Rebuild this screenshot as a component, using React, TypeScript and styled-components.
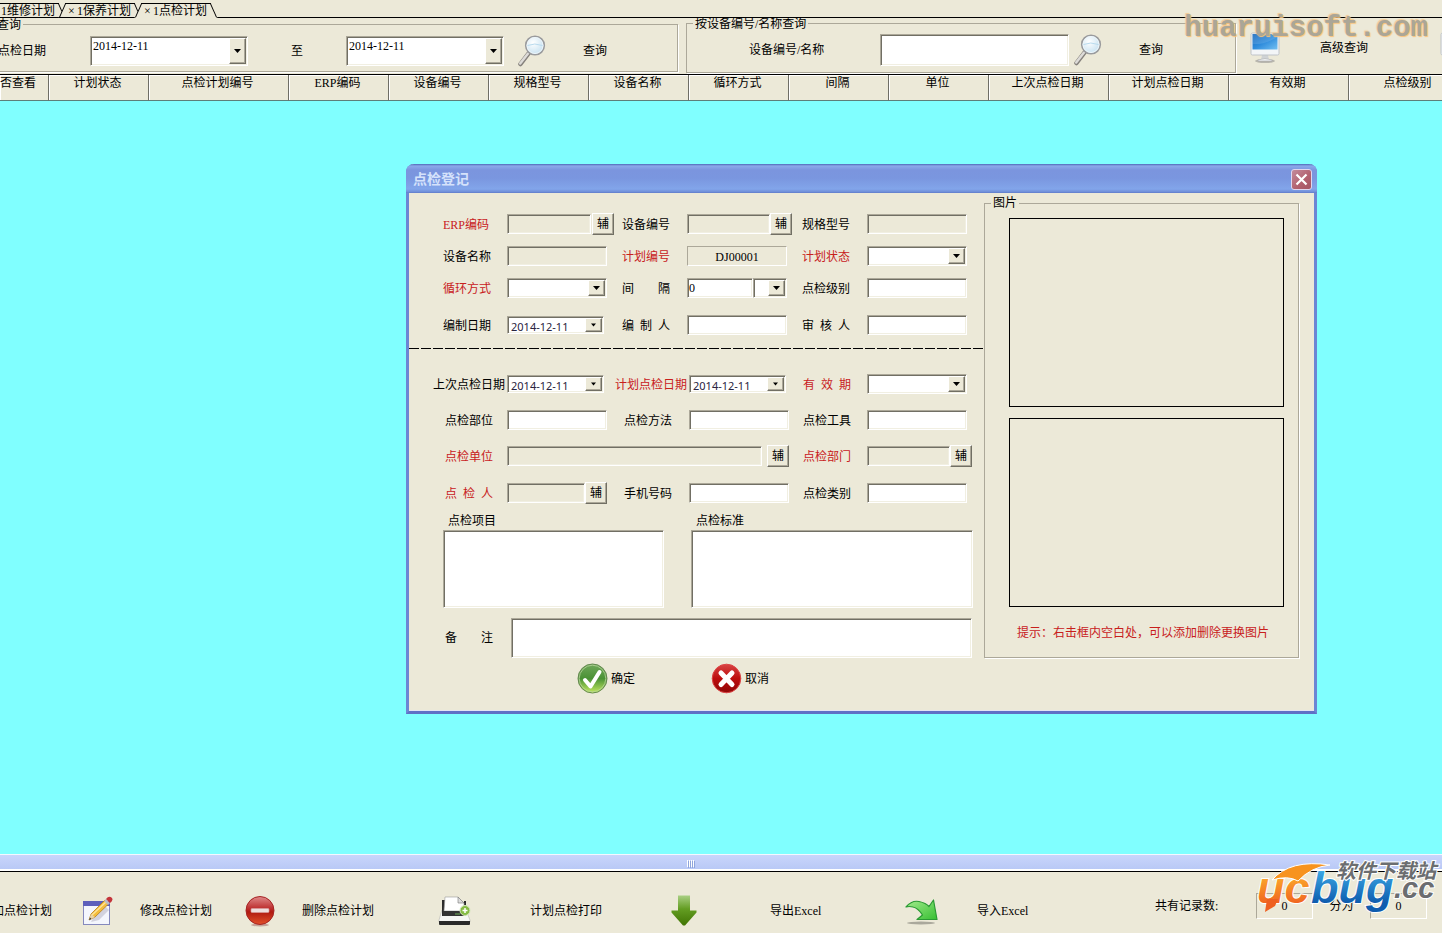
import React from 'react';
import styled, { createGlobalStyle, css } from 'styled-components';

const FACE = '#ece9d8';
const RED = '#c8201c';

const GlobalStyle = createGlobalStyle`
  *, *::before, *::after { box-sizing: border-box; }
  body { margin: 0; background: ${FACE}; }
  body, button, input, select, textarea {
    font-family: "Liberation Serif", "Noto Sans CJK SC", serif;
    font-size: 12px;
    line-height: 14px;
    color: #000;
  }
  button { background: none; border: 0; padding: 0; cursor: pointer; white-space: nowrap; }
  svg { display: block; flex: none; }
`;

const sunken = css`
  border: 1px solid;
  border-color: #aca899 #fff #fff #aca899;
  box-shadow: inset 1px 1px 0 #716f64, inset -1px -1px 0 #f1efe2;
`;

const raised = css`
  background: ${FACE};
  border: 1px solid;
  border-color: #fff #716f64 #716f64 #fff;
  box-shadow: inset -1px -1px 0 #aca899;
`;

const Page = styled.div`
  position: relative;
  display: flex;
  flex-direction: column;
  min-height: 100vh;
  overflow: hidden;
  background: ${FACE};
`;

/* ---------- tabs ---------- */

const TabStrip = styled.nav`
  display: flex;
  align-items: flex-end;
  height: 18px;
  margin-left: -14px;
  box-shadow: inset 0 -1px 0 #000;
`;

const Tab = styled.button<{ $active?: boolean }>`
  position: relative;
  isolation: isolate;
  display: flex;
  align-items: center;
  width: 76px;
  height: 15px;
  padding-left: 6px;

  &::before, &::after {
    content: '';
    position: absolute;
    z-index: -1;
    top: 0;
    bottom: 0;
    width: 62%;
    background: ${FACE};
    border-top: 1px solid #000;
    border-bottom: 1px solid ${p => (p.$active ? FACE : '#000')};
  }
  &::before { left: 0; border-left: 1px solid #000; transform: skewX(-24deg); }
  &::after { right: 0; border-right: 1px solid #000; transform: skewX(24deg); }
`;

const TabClose = styled.span`
  width: 9px;
  text-align: left;
`;

/* ---------- query bar ---------- */

const QueryBar = styled.form`
  display: flex;
  align-items: center;
  gap: 8px;
  height: 57px;
  margin-left: -12px;
  padding-bottom: 2px;
  border-bottom: 1px solid #000;
`;

const Group = styled.fieldset`
  min-width: 0;
  margin: 0;
  padding: 0;
  border: 1px solid #aca899;
  box-shadow: 1px 1px 0 #fff;
`;

const Legend = styled.legend`
  margin-left: 6px;
  padding: 0 2px;
  line-height: 12px;
  background: ${FACE};
`;

const QueryGroup = styled(Group)<{ $width: number; $height: number }>`
  flex: none;
  width: ${p => p.$width}px;
  height: ${p => p.$height}px;
`;

const QueryGrid = styled.div<{ $columns: string; $indent: number }>`
  display: grid;
  grid-template-columns: ${p => p.$columns};
  align-items: center;
  height: 40px;
  padding-left: ${p => p.$indent}px;
`;

const Between = styled.label`
  text-align: center;
`;

const IconButton = styled.button<{ $gap: number; $indent?: number }>`
  display: flex;
  align-items: center;
  gap: ${p => p.$gap}px;
  padding-left: ${p => p.$indent ?? 0}px;
`;

const Extras = styled.div`
  display: flex;
  flex: none;
  gap: 72px;
  padding: 5px 0 0 6px;
`;

/* ---------- controls ---------- */

const TextInput = styled.input<{ $width?: number; $height?: number }>`
  ${sunken}
  flex: none;
  width: ${p => p.$width ?? 100}px;
  height: ${p => p.$height ?? 20}px;
  padding: 0 1px;
  border-radius: 0;
  background: ${p => (p.readOnly ? FACE : '#fff')};
  outline: none;
`;

const TextBox = styled.textarea<{ $width: number; $height: number }>`
  ${sunken}
  display: block;
  width: ${p => p.$width}px;
  height: ${p => p.$height}px;
  padding: 2px;
  resize: none;
  background: #fff;
  outline: none;
`;

const ComboFrame = styled.div<{ $width: number; $height: number }>`
  ${sunken}
  display: flex;
  flex: none;
  width: ${p => p.$width}px;
  height: ${p => p.$height}px;
  padding: 1px;
  background: #fff;
`;

const ComboInput = styled.input<{ $small?: boolean }>`
  flex: 1;
  min-width: 0;
  align-self: ${p => (p.$small ? 'stretch' : 'flex-start')};
  padding: ${p => (p.$small ? '3px 0 0 2px' : '1px 0 0 1px')};
  border: 0;
  background: transparent;
  outline: none;
  font-family: ${p => (p.$small ? '"Noto Sans", sans-serif' : 'inherit')};
  font-size: ${p => (p.$small ? 11 : 12)}px;
  color: ${p => (p.$small ? '#2a2440' : '#000')};
`;

const ComboSelect = styled.select`
  flex: 1;
  min-width: 0;
  padding: 0;
  border: 0;
  appearance: none;
  background: transparent;
  outline: none;
`;

const ArrowButton = styled.button`
  ${raised}
  display: flex;
  flex: none;
  align-items: center;
  justify-content: center;
  width: 17px;
`;

const ArrowFace = styled.span`
  ${raised}
  display: flex;
  flex: none;
  align-items: center;
  justify-content: center;
  width: 17px;
  pointer-events: none;
`;

const AssistButton = styled.button`
  ${raised}
  flex: none;
  width: 22px;
  height: 22px;
`;

const Down = ({ size = 7 }: { size?: number }) => (
  <svg width={size} height="4" viewBox="0 0 7 4" aria-hidden="true">
    <path d="M0 0h7L3.500 4z" fill="#000" />
  </svg>
);

const DateBox = ({ id, width, height, small }: { id: string; width: number; height: number; small?: boolean }) => (
  <ComboFrame $width={width} $height={height}>
    <ComboInput id={id} defaultValue="2014-12-11" $small={small} />
    <ArrowButton type="button" aria-label="选择日期">
      <Down size={small ? 5 : 7} />
    </ArrowButton>
  </ComboFrame>
);

const SelectBox = ({ id, width, label }: { id: string; width: number; label?: string }) => (
  <ComboFrame $width={width} $height={20}>
    <ComboSelect id={id} aria-label={label} />
    <ArrowFace>
      <Down />
    </ArrowFace>
  </ComboFrame>
);

/* ---------- record table ---------- */

const Records = styled.table`
  flex: none;
  width: 1469px;
  table-layout: fixed;
  border-collapse: separate;
  border-spacing: 0;
`;

const HeadCell = styled.th<{ $clipped?: boolean }>`
  height: 26px;
  padding: ${p => (p.$clipped ? '1px 13px 0 0' : '1px 2px 0 0')};
  vertical-align: top;
  text-align: ${p => (p.$clipped ? 'right' : 'center')};
  font-weight: normal;
  white-space: nowrap;
  border-right: 1px solid #6f6e66;
  border-bottom: 1px solid #5d7f7a;
  box-shadow: inset 1px 1px 0 #fff;
`;

const Workspace = styled.main`
  position: relative;
  flex: 1 0 auto;
  min-height: 640px;
  background: #80ffff;
`;

const Splitter = styled.div`
  display: flex;
  align-items: center;
  justify-content: center;
  gap: 1px;
  height: 18px;
  padding-right: 62px;
  border-top: 1px solid #f4f8ff;
  border-bottom: 1px solid #000;
  background: linear-gradient(#c9d5fb, #b9c9f6 14px, #fff 14px);
`;

const Grip = styled.span`
  width: 1px;
  height: 7px;
  background: #fff;
  box-shadow: 1px 1px 0 #8fa5dc;
`;

/* ---------- dialog ---------- */

const Dialog = styled.section`
  position: absolute;
  top: 63px;
  left: 406px;
  width: 911px;
  background: ${FACE};
  border: 3px solid #6c86d4;
  border-top: 0;
  border-bottom-color: #5f70c6;
  border-radius: 8px 8px 0 0;
  box-shadow: inset 0 -1px 0 #e4e4f4;
`;

const TitleBar = styled.header`
  display: flex;
  align-items: center;
  justify-content: space-between;
  height: 29px;
  margin: 0 -3px;
  padding: 2px 5px 0 7px;
  border-radius: 8px 8px 0 0;
  background: linear-gradient(#4f68b8 0, #8ba9ea 2px, #7b95de 6px, #7a96df 14px, #82a5ea 25px, #6f8ed8 28px, #5d78c6);
`;

const Title = styled.h1`
  margin: 0;
  font-size: 14px;
  line-height: 18px;
  font-weight: bold;
  color: #d5e2fb;
`;

const CloseButton = styled.button`
  display: flex;
  align-items: center;
  justify-content: center;
  width: 21px;
  height: 21px;
  border: 1px solid #dfd6ee;
  border-radius: 3px;
  background: linear-gradient(135deg, #c38c9c, #b2606e 60%, #a45664);
`;

const DialogBody = styled.form`
  display: flex;
  align-items: flex-start;
  padding-right: 15px;
`;

const FormSide = styled.div`
  flex: 1;
  min-width: 0;
`;

const Fields = styled.div<{ $second?: boolean }>`
  display: grid;
  align-items: center;
  grid-template-columns: ${p => (p.$second ? '62px 117px 65px 114px 64px 1fr' : '64px 115px 65px 115px 65px 1fr')};
  grid-template-rows: ${p => (p.$second ? '36px 36px 36px 38px' : '32px 32px 32px 42px')};
  padding: ${p => (p.$second ? '17px 0 0 36px' : '15px 0 2px 34px')};
`;

const Divider = styled.hr`
  height: 1px;
  margin: 0;
  border: 0;
  background: repeating-linear-gradient(90deg, #000 0 10px, transparent 10px 12px);
`;

const FieldLabel = styled.label<{ $required?: boolean; $wide?: boolean }>`
  justify-self: ${p => (p.$wide ? 'end' : 'start')};
  padding: 1px ${p => (p.$wide ? 2 : 0)}px 0 0;
  white-space: pre;
  color: ${p => (p.$required ? RED : '#000')};
`;

const Cell = styled.div<{ $span?: number; $gap?: number }>`
  display: flex;
  align-items: center;
  gap: ${p => p.$gap ?? 0}px;
  grid-column: span ${p => p.$span ?? 1};
`;

const PlanNumber = styled.output`
  width: 100px;
  height: 20px;
  line-height: 20px;
  text-align: center;
  border: 1px solid;
  border-color: #aca899 #fff #fff #aca899;
`;

const Notes = styled.div`
  display: flex;
  gap: 27px;
  padding-left: 34px;
`;

const NoteLabel = styled.label`
  display: block;
  padding-left: 5px;
  line-height: 18px;
`;

const Remark = styled.div`
  display: flex;
  align-items: center;
  padding: 10px 0 5px 36px;
`;

const RemarkLabel = styled.label`
  width: 66px;
  white-space: pre;
`;

const Actions = styled.div`
  display: flex;
  gap: 76px;
  height: 48px;
  align-items: flex-start;
  padding-left: 168px;
`;

const Pictures = styled(Group)`
  flex: none;
  width: 315px;
  height: 461px;
  margin-top: 4px;
`;

const PictureList = styled.div`
  padding: 9px 14px 0 24px;
`;

const PictureFrame = styled.div`
  height: 189px;
  margin-bottom: 11px;
  border: 1px solid #000;
`;

const Hint = styled.p`
  margin: 0;
  padding: 8px 0 0 8px;
  white-space: nowrap;
  color: ${RED};
`;

/* ---------- bottom bar ---------- */

const BottomBar = styled.footer`
  display: grid;
  grid-template-columns: 82px 163px 193px 233px 234px 250px 1fr;
  align-items: center;
  height: 61px;
  padding-top: 16px;
`;

const BarButton = styled.button<{ $slot: number }>`
  display: grid;
  grid-template-columns: ${p => p.$slot}px auto;
  align-items: center;
  justify-content: start;
  text-align: left;
`;

const ClippedButton = styled.button`
  display: flex;
  justify-content: flex-end;
  width: 52px;
`;

const Counters = styled.div`
  display: flex;
  align-items: center;
  padding-bottom: 10px;
  white-space: nowrap;
`;

const CounterText = styled.span<{ $width: number; $center?: boolean }>`
  flex: none;
  width: ${p => p.$width}px;
  text-align: ${p => (p.$center ? 'center' : 'left')};
`;

const CounterValue = styled.output`
  flex: none;
  width: 57px;
  height: 26px;
  line-height: 24px;
  text-align: center;
  border: 1px solid;
  border-color: #aca899 #fff #fff #aca899;
`;

/* ---------- marks over the page ---------- */

const SiteMark = styled.div`
  position: absolute;
  top: 12px;
  right: 14px;
  font: bold 29px/34px "Liberation Mono", monospace;
  color: #aba697;
  text-shadow: 1px 1px 1px #f9c078, -1px -1px 1px #f3cb94;
  pointer-events: none;
`;

const LogoMark = styled.svg`
  position: absolute;
  right: 0;
  bottom: 13px;
  pointer-events: none;
`;

/* ---------- icons ---------- */

const Magnifier = () => (
  <svg width="30" height="32" viewBox="0 0 30 32" aria-hidden="true">
    <defs>
      <radialGradient id="lens" cx="40%" cy="35%" r="70%">
        <stop offset="0" stopColor="#fff" />
        <stop offset="1" stopColor="#c4e0f0" />
      </radialGradient>
    </defs>
    <path d="M11.500 18.500L3.500 29" stroke="#85817c" strokeWidth="4.500" strokeLinecap="round" />
    <path d="M11 18.500L3.200 28.500" stroke="#dddbd8" strokeWidth="2.500" strokeLinecap="round" />
    <circle cx="18" cy="10.500" r="9.300" fill="url(#lens)" stroke="#9a9b9d" strokeWidth="1.600" />
    <circle cx="18" cy="10.500" r="8" fill="none" stroke="#eef6fa" />
    <path d="M10.500 10.500q7-3 15 0" stroke="#b9dbee" fill="none" />
  </svg>
);

const Monitor = () => (
  <svg width="30" height="32" viewBox="0 0 30 32" aria-hidden="true">
    <defs>
      <linearGradient id="screen" x1="0" y1="0" x2="1" y2="1">
        <stop offset="0" stopColor="#1466bd" />
        <stop offset=".5" stopColor="#2f8cdc" />
        <stop offset="1" stopColor="#74c0f2" />
      </linearGradient>
    </defs>
    <ellipse cx="15" cy="29" rx="10" ry="2" fill="#b9b7ae" />
    <path d="M12 23h6l1 5h-8z" fill="#cfd2d4" />
    <path d="M8 28q7-3 14 0v1H8z" fill="#eef0f1" stroke="#a0a2a4" strokeWidth=".5" />
    <rect x="1" y="1" width="28" height="22" rx="1.500" fill="#f3f5f7" stroke="#bfc3c8" />
    <rect x="2.500" y="2" width="25" height="15.500" fill="url(#screen)" />
    <path d="M2.500 12Q14 13 27.500 5V2h-25z" fill="#fff" opacity=".12" />
  </svg>
);

const EditIcon = () => (
  <svg width="31" height="30" viewBox="0 0 31 30" aria-hidden="true">
    <rect x="1.500" y="5.500" width="26" height="23" fill="#f4f6fd" stroke="#8589bd" />
    <rect x="1" y="5" width="27" height="5" fill="#5d5fbb" />
    <path d="M11 22l12-12 4 4-10 10-8 2z" fill="#c9c9d6" opacity=".8" />
    <path d="M7 24l2-6L23 4l4 3.500L13 21z" fill="#f4bd3b" stroke="#b67d1c" strokeWidth=".8" />
    <path d="M10 19L24.500 5.500" stroke="#fde39a" strokeWidth="1.500" />
    <path d="M7 24l2-6 4 3z" fill="#e8d3a8" />
    <path d="M7 24l1-2.500 1.500 1.500z" fill="#333" />
    <path d="M22 5l2-2 4 4-2 2z" fill="#b9bcc4" />
    <path d="M24 3q3-4 6-1 1.500 2.500-2 5z" fill="#c4343a" />
  </svg>
);

const RemoveIcon = () => (
  <svg width="30" height="32" viewBox="0 0 30 32" aria-hidden="true">
    <defs>
      <linearGradient id="stop" x1="0" y1="0" x2="0" y2="1">
        <stop offset="0" stopColor="#e08a8a" />
        <stop offset=".45" stopColor="#bb2a2a" />
        <stop offset=".55" stopColor="#b01a10" />
        <stop offset="1" stopColor="#e2502a" />
      </linearGradient>
    </defs>
    <ellipse cx="15" cy="30" rx="9" ry="1.500" fill="#c5a49a" />
    <circle cx="15" cy="15.500" r="14" fill="url(#stop)" stroke="#a52525" />
    <rect x="6" y="13.500" width="18" height="4" rx="1" fill="#eedede" stroke="#d9a0a0" strokeWidth=".6" />
  </svg>
);

const PrinterIcon = () => (
  <svg width="33" height="30" viewBox="0 0 33 30" aria-hidden="true">
    <path d="M4 14h24l4 10v2H1v-2z" fill="#f6f6f4" stroke="#b5b5b0" strokeWidth=".6" />
    <path d="M4 4h3v11h19V5h2v15H4z" fill="#2c2c2c" />
    <path d="M7 1h13l6 6v8H6z" fill="#fff" stroke="#999" strokeWidth=".6" />
    <path d="M20 1v6h6z" fill="#ddd" stroke="#777" strokeWidth=".6" />
    <path d="M5 15h22v5H5z" fill="#333" />
    <path d="M1 25h31v3q0 1-1 1H2q-1 0-1-1z" fill="#2a2a2a" />
    <path d="M17 18h5" stroke="#6fae5a" />
    <circle cx="27" cy="14.500" r="5" fill="#86bb45" stroke="#d5e8bd" />
    <path d="M27 12v5M24.500 14.500h5" stroke="#fff" strokeWidth="1.500" />
  </svg>
);

const DownArrowIcon = () => (
  <svg width="26" height="31" viewBox="0 0 26 31" aria-hidden="true">
    <defs>
      <linearGradient id="down" x1="0" y1="0" x2="0" y2="1">
        <stop offset="0" stopColor="#a9cf83" />
        <stop offset=".45" stopColor="#639d22" />
        <stop offset="1" stopColor="#417504" />
      </linearGradient>
    </defs>
    <path d="M7 0.500h12v15h6.500v2L14 30.500h-2L0.500 17.500v-2H7z" fill="url(#down)" />
  </svg>
);

const ImportIcon = () => (
  <svg width="34" height="28" viewBox="0 0 34 28" aria-hidden="true">
    <defs>
      <linearGradient id="import" x1="0" y1="0" x2="1" y2="1">
        <stop offset="0" stopColor="#a5ec8e" />
        <stop offset="1" stopColor="#36bf32" />
      </linearGradient>
    </defs>
    <ellipse cx="16" cy="26" rx="14" ry="1.500" fill="#aaa89c" />
    <path
      d="M1 10Q7 3 14 4.500 21 6 24 9.500L28.500 3 32 22.500 12 22.500 17.500 18Q13 11 8 10 4 9 1 10z"
      fill="url(#import)"
      stroke="#2a9a33"
      strokeWidth="1.200"
      strokeLinejoin="round"
    />
  </svg>
);

const OkIcon = () => (
  <svg width="31" height="31" viewBox="0 0 31 31" aria-hidden="true">
    <defs>
      <linearGradient id="ok" x1="0" y1="0" x2="0" y2="1">
        <stop offset="0" stopColor="#6fa75a" />
        <stop offset=".5" stopColor="#4a9235" />
        <stop offset="1" stopColor="#c3e860" />
      </linearGradient>
    </defs>
    <circle cx="15.500" cy="15.500" r="14.500" fill="url(#ok)" stroke="#64874f" />
    <circle cx="15.500" cy="15.500" r="13.300" fill="none" stroke="#b8d69c" strokeWidth=".8" />
    <path d="M8 17l5.500 6.500L22.500 9" fill="none" stroke="#fff" strokeWidth="4" strokeLinecap="round" strokeLinejoin="round" />
  </svg>
);

const CancelIcon = () => (
  <svg width="31" height="31" viewBox="0 0 31 31" aria-hidden="true">
    <defs>
      <linearGradient id="cancel" x1="0" y1="0" x2="0" y2="1">
        <stop offset="0" stopColor="#d84444" />
        <stop offset=".5" stopColor="#bd0d0d" />
        <stop offset="1" stopColor="#8f0808" />
      </linearGradient>
    </defs>
    <circle cx="15.500" cy="15.500" r="14.300" fill="url(#cancel)" stroke="#d44" />
    <path d="M10 10l11 11.500M21 10L10 21.500" stroke="#fff" strokeWidth="5" strokeLinecap="round" />
  </svg>
);

const Logo = () => (
  <LogoMark width="192" height="64" viewBox="0 0 192 64" role="img" aria-label="ucbug.cc 软件下载站">
    <defs>
      <linearGradient id="flame" x1="0" y1="0" x2="0" y2="1">
        <stop offset=".3" stopColor="#fba52c" />
        <stop offset=".9" stopColor="#ee5a1e" />
      </linearGradient>
      <linearGradient id="sea" x1="0" y1="0" x2="0" y2="1">
        <stop offset=".1" stopColor="#3fb0ea" />
        <stop offset=".8" stopColor="#0f5cae" />
      </linearGradient>
    </defs>
    <g fontFamily="Liberation Sans, sans-serif" fontWeight="bold" fontStyle="italic" stroke="#fff" strokeWidth="2" paintOrder="stroke">
      <text x="7" y="47" fontSize="45" fill="url(#flame)">uc</text>
      <path d="M17 43h11l-3 7-10 6z" fill="#ee5f20" stroke="none" />
      <text x="61" y="47" fontSize="45" fill="url(#sea)">bug</text>
      <text x="144" y="42" fontSize="29" fill="#6b6d70">.cc</text>
      <text x="86" y="22" fontSize="20" fontFamily="Noto Sans CJK SC, sans-serif" fill="#6b6d70">软件下载站</text>
    </g>
    <path d="M22 24Q40 3 80 9 61 11 48 25 38 19 22 24z" fill="#f7931e" stroke="#fff" />
  </LogoMark>
);

/* ---------- page ---------- */

const COLUMNS: [string, number][] = [
  ['否查看', 49],
  ['计划状态', 100],
  ['点检计划编号', 140],
  ['ERP编码', 100],
  ['设备编号', 100],
  ['规格型号', 100],
  ['设备名称', 100],
  ['循环方式', 100],
  ['间隔', 100],
  ['单位', 100],
  ['上次点检日期', 120],
  ['计划点检日期', 120],
  ['有效期', 120],
  ['点检级别', 120],
];

const TABS = ['1维修计划', '1保养计划', '1点检计划'];

const Assist = () => <AssistButton type="button">辅</AssistButton>;

const RegisterDialog = () => (
  <Dialog role="dialog" aria-labelledby="dialog-title">
    <TitleBar>
      <Title id="dialog-title">点检登记</Title>
      <CloseButton type="button" aria-label="关闭">
        <svg width="13" height="13" viewBox="0 0 13 13" aria-hidden="true">
          <path d="M1.500 1.500l10 10M11.500 1.500l-10 10" stroke="#fff" strokeWidth="2.200" />
        </svg>
      </CloseButton>
    </TitleBar>
    <DialogBody onSubmit={e => e.preventDefault()}>
      <FormSide>
        <Fields>
          <FieldLabel htmlFor="erp" $required>ERP编码</FieldLabel>
          <Cell $gap={1}><TextInput id="erp" $width={84} readOnly /><Assist /></Cell>
          <FieldLabel htmlFor="device-no">设备编号</FieldLabel>
          <Cell><TextInput id="device-no" $width={83} readOnly /><Assist /></Cell>
          <FieldLabel htmlFor="model">规格型号</FieldLabel>
          <Cell><TextInput id="model" readOnly /></Cell>

          <FieldLabel htmlFor="device-name">设备名称</FieldLabel>
          <Cell><TextInput id="device-name" readOnly /></Cell>
          <FieldLabel htmlFor="plan-no" $required>计划编号</FieldLabel>
          <Cell><PlanNumber id="plan-no">DJ00001</PlanNumber></Cell>
          <FieldLabel htmlFor="status" $required>计划状态</FieldLabel>
          <Cell><SelectBox id="status" width={100} /></Cell>

          <FieldLabel htmlFor="cycle" $required>循环方式</FieldLabel>
          <Cell><SelectBox id="cycle" width={100} /></Cell>
          <FieldLabel htmlFor="interval">{'间        隔'}</FieldLabel>
          <Cell>
            <TextInput id="interval" $width={66} defaultValue="0" />
            <SelectBox id="interval-unit" width={34} label="间隔单位" />
          </Cell>
          <FieldLabel htmlFor="level">点检级别</FieldLabel>
          <Cell><TextInput id="level" /></Cell>

          <FieldLabel htmlFor="made-on">编制日期</FieldLabel>
          <Cell><DateBox id="made-on" width={97} height={18} small /></Cell>
          <FieldLabel htmlFor="made-by">{'编  制  人'}</FieldLabel>
          <Cell><TextInput id="made-by" /></Cell>
          <FieldLabel htmlFor="reviewer">{'审  核  人'}</FieldLabel>
          <Cell><TextInput id="reviewer" /></Cell>
        </Fields>
        <Divider />
        <Fields $second>
          <FieldLabel htmlFor="last-date" $wide>上次点检日期</FieldLabel>
          <Cell><DateBox id="last-date" width={97} height={18} small /></Cell>
          <FieldLabel htmlFor="next-date" $wide $required>计划点检日期</FieldLabel>
          <Cell><DateBox id="next-date" width={97} height={18} small /></Cell>
          <FieldLabel htmlFor="valid" $required>{'有  效  期'}</FieldLabel>
          <Cell><SelectBox id="valid" width={100} /></Cell>

          <FieldLabel htmlFor="part">点检部位</FieldLabel>
          <Cell><TextInput id="part" /></Cell>
          <FieldLabel htmlFor="method">点检方法</FieldLabel>
          <Cell><TextInput id="method" /></Cell>
          <FieldLabel htmlFor="tool">点检工具</FieldLabel>
          <Cell><TextInput id="tool" /></Cell>

          <FieldLabel htmlFor="company" $required>点检单位</FieldLabel>
          <Cell $span={3} $gap={5}><TextInput id="company" $width={255} readOnly /><Assist /></Cell>
          <FieldLabel htmlFor="department" $required>点检部门</FieldLabel>
          <Cell><TextInput id="department" $width={83} readOnly /><Assist /></Cell>

          <FieldLabel htmlFor="person" $required>{'点  检  人'}</FieldLabel>
          <Cell><TextInput id="person" $width={78} readOnly /><Assist /></Cell>
          <FieldLabel htmlFor="phone">手机号码</FieldLabel>
          <Cell><TextInput id="phone" /></Cell>
          <FieldLabel htmlFor="category">点检类别</FieldLabel>
          <Cell><TextInput id="category" /></Cell>
        </Fields>
        <Notes>
          <div>
            <NoteLabel htmlFor="items">点检项目</NoteLabel>
            <TextBox id="items" $width={221} $height={78} />
          </div>
          <div>
            <NoteLabel htmlFor="standard">点检标准</NoteLabel>
            <TextBox id="standard" $width={282} $height={78} />
          </div>
        </Notes>
        <Remark>
          <RemarkLabel htmlFor="remark">{'备        注'}</RemarkLabel>
          <TextBox id="remark" $width={461} $height={40} />
        </Remark>
        <Actions>
          <IconButton type="submit" $gap={3}><OkIcon />确定</IconButton>
          <IconButton type="button" $gap={3}><CancelIcon />取消</IconButton>
        </Actions>
      </FormSide>
      <Pictures>
        <Legend>图片</Legend>
        <PictureList>
          <PictureFrame />
          <PictureFrame />
          <Hint>提示：右击框内空白处，可以添加删除更换图片</Hint>
        </PictureList>
      </Pictures>
    </DialogBody>
  </Dialog>
);

export default function App() {
  return (
    <>
      <GlobalStyle />
      <Page>
        <TabStrip>
          {TABS.map((name, i) => (
            <Tab key={name} type="button" $active={i === TABS.length - 1}>
              <TabClose>×</TabClose>
              {name}
            </Tab>
          ))}
        </TabStrip>
        <QueryBar onSubmit={e => e.preventDefault()}>
          <QueryGroup $width={690} $height={53}>
            <Legend>查询</Legend>
            <QueryGrid $columns="92px 158px 98px 158px 1fr" $indent={9}>
              <label htmlFor="from">点检日期</label>
              <DateBox id="from" width={158} height={30} />
              <Between htmlFor="to">至</Between>
              <DateBox id="to" width={158} height={30} />
              <IconButton type="submit" $gap={36} $indent={13}><Magnifier />查询</IconButton>
            </QueryGrid>
          </QueryGroup>
          <QueryGroup $width={550} $height={55}>
            <Legend>按设备编号/名称查询</Legend>
            <QueryGrid $columns="131px 189px 1fr" $indent={62}>
              <label htmlFor="keyword">设备编号/名称</label>
              <TextInput id="keyword" $width={189} $height={32} />
              <IconButton type="submit" $gap={36} $indent={4}><Magnifier />查询</IconButton>
            </QueryGrid>
          </QueryGroup>
          <Extras>
            <IconButton type="button" $gap={40}><Monitor />高级查询</IconButton>
            <IconButton type="button" $gap={0} aria-label="更多"><Monitor /></IconButton>
          </Extras>
        </QueryBar>
        <Records>
          <colgroup>
            {COLUMNS.map(([name, width]) => <col key={name} width={width} />)}
          </colgroup>
          <thead>
            <tr>
              {COLUMNS.map(([name], i) => (
                <HeadCell key={name} scope="col" $clipped={i === 0}>{name}</HeadCell>
              ))}
            </tr>
          </thead>
        </Records>
        <Workspace>
          <RegisterDialog />
        </Workspace>
        <Splitter>
          <Grip /><Grip /><Grip /><Grip />
        </Splitter>
        <BottomBar>
          <ClippedButton type="button">加点检计划</ClippedButton>
          <BarButton type="button" $slot={58}><EditIcon />修改点检计划</BarButton>
          <BarButton type="button" $slot={57}><RemoveIcon />删除点检计划</BarButton>
          <BarButton type="button" $slot={92}><PrinterIcon />计划点检打印</BarButton>
          <BarButton type="button" $slot={99}><DownArrowIcon />导出Excel</BarButton>
          <BarButton type="button" $slot={72}><ImportIcon />导入Excel</BarButton>
          <Counters>
            <CounterText $width={101}>共有记录数:</CounterText>
            <CounterValue>0</CounterValue>
            <CounterText $width={57} $center>分为</CounterText>
            <CounterValue>0</CounterValue>
          </Counters>
        </BottomBar>
        <SiteMark>huaruisoft.com</SiteMark>
        <Logo />
      </Page>
    </>
  );
}
